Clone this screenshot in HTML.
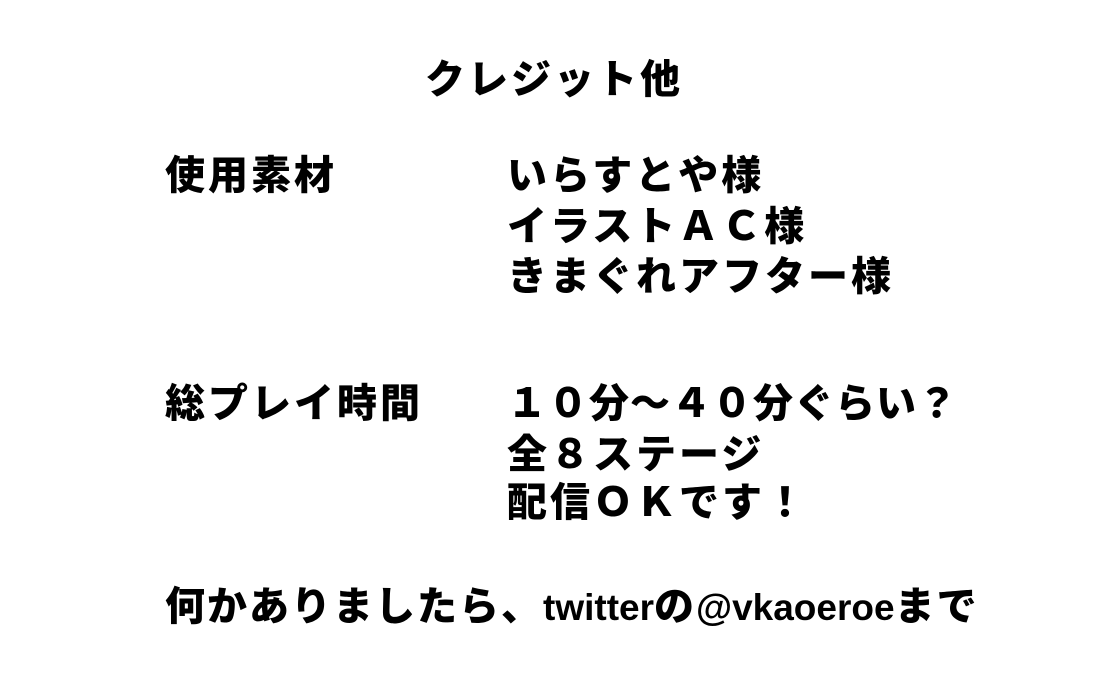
<!DOCTYPE html>
<html><head><meta charset="utf-8"><style>
html,body{margin:0;padding:0;background:#fff;width:1100px;height:700px;overflow:hidden}
.t{position:absolute;font-family:"Liberation Sans","Noto Sans CJK JP",sans-serif;font-weight:900;font-size:40px;line-height:40px;color:#000;white-space:nowrap;letter-spacing:3px}
.l{letter-spacing:0;font-size:37px}
</style></head><body>
<div class="t" style="left:425px;top:60px">クレジット他</div>
<div class="t" style="left:165px;top:156px">使用素材</div>
<div class="t" style="left:507px;top:156px">いらすとや様</div>
<div class="t" style="left:507px;top:207px">イラストＡＣ様</div>
<div class="t" style="left:507px;top:257px">きまぐれアフター様</div>
<div class="t" style="left:165px;top:384px">総プレイ時間</div>
<div class="t" style="left:507px;top:384px;letter-spacing:1px">１０分～４０分ぐらい？</div>
<div class="t" style="left:507px;top:435px">全８ステージ</div>
<div class="t" style="left:507px;top:483px">配信ＯＫです！</div>
<div class="t" style="left:165px;top:587px;letter-spacing:2px">何かありましたら、<span class="l">twitter</span>の<span class="l">@vkaoeroe</span>まで</div>
</body></html>
